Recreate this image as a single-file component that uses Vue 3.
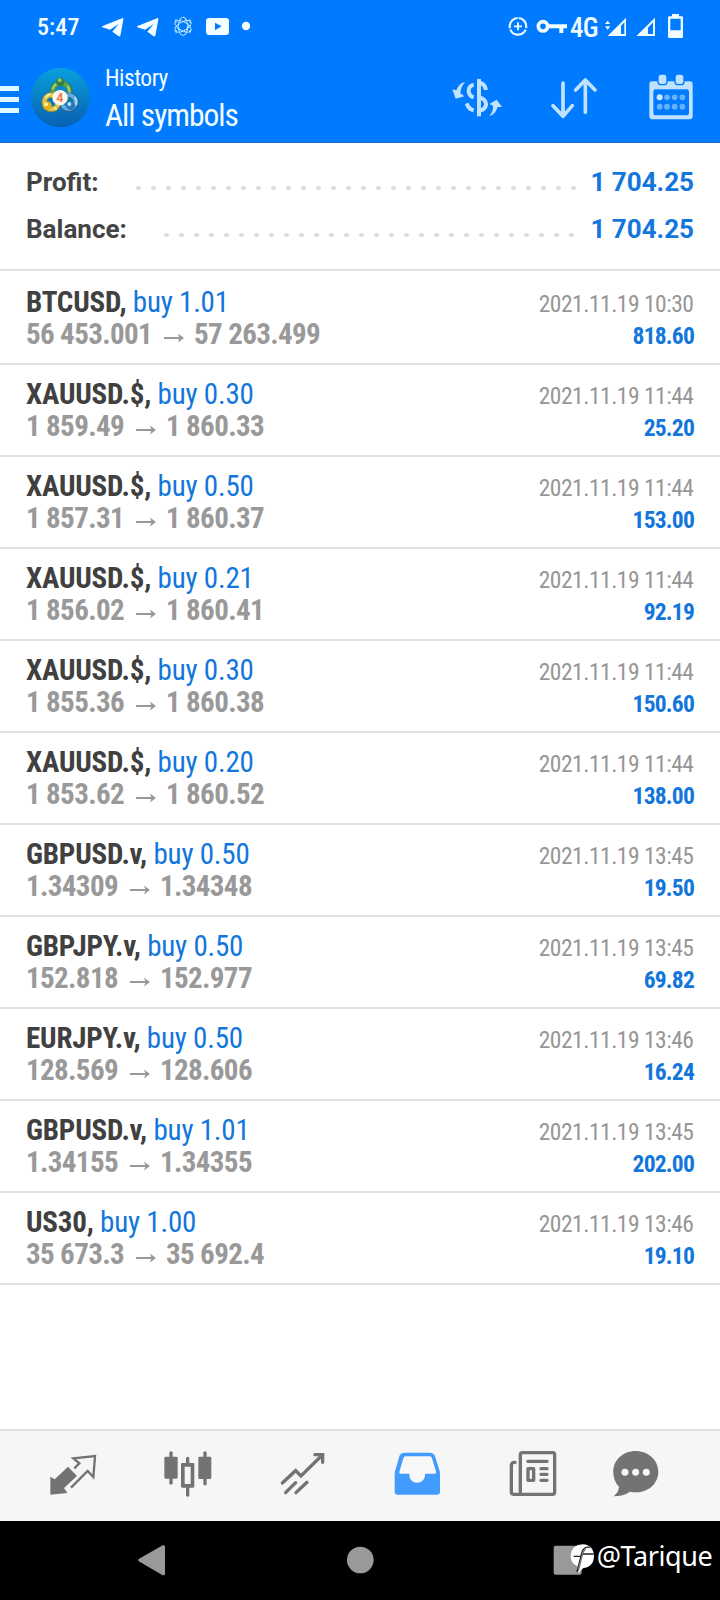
<script setup>
const summary = [
  { label: 'Profit:', value: '1 704.25', dots: 30 },
  { label: 'Balance:', value: '1 704.25', dots: 28 },
]
const deals = [
  ['BTCUSD', '1.01', '56 453.001', '57 263.499', '10:30', '818.60'],
  ['XAUUSD.$', '0.30', '1 859.49', '1 860.33', '11:44', '25.20'],
  ['XAUUSD.$', '0.50', '1 857.31', '1 860.37', '11:44', '153.00'],
  ['XAUUSD.$', '0.21', '1 856.02', '1 860.41', '11:44', '92.19'],
  ['XAUUSD.$', '0.30', '1 855.36', '1 860.38', '11:44', '150.60'],
  ['XAUUSD.$', '0.20', '1 853.62', '1 860.52', '11:44', '138.00'],
  ['GBPUSD.v', '0.50', '1.34309', '1.34348', '13:45', '19.50'],
  ['GBPJPY.v', '0.50', '152.818', '152.977', '13:45', '69.82'],
  ['EURJPY.v', '0.50', '128.569', '128.606', '13:46', '16.24'],
  ['GBPUSD.v', '1.01', '1.34155', '1.34355', '13:45', '202.00'],
  ['US30', '1.00', '35 673.3', '35 692.4', '13:46', '19.10'],
].map(([symbol, volume, open, close, time, profit]) => ({ symbol, volume, open, close, time, profit }))
</script>

<template>
  <div class="screen">
    <header class="top">
      <div class="status">
        <span class="clock">5:47</span>
        <svg class="notes" viewBox="300 42 460 72" width="153.33" height="24">
          <g fill="#f4fdff">
            <path d="M306 79 L368 54 Q371 54 370 59 L361 107 Q359 111 355 108 L337 95 L356 72 L330 89 L307 82 Z" />
            <path d="M411 79 L473 54 Q476 54 475 59 L466 107 Q464 111 460 108 L442 95 L461 72 L435 89 L412 82 Z" />
            <path fill-rule="evenodd" d="M628 54 H678 Q687 54 687 63 V96 Q687 105 678 105 H628 Q618 105 618 96 V63 Q618 54 628 54 Z M645 68 V91 L665 79 Z" />
            <circle cx="738" cy="78" r="12.5" />
          </g>
          <g fill="none" stroke="#d4f4ff" stroke-width="3.2" stroke-dasharray="6 1.5">
            <ellipse cx="549" cy="79" rx="14" ry="27" />
            <ellipse cx="549" cy="79" rx="13" ry="27" transform="rotate(60 549 79)" />
            <ellipse cx="549" cy="79" rx="13" ry="27" transform="rotate(120 549 79)" />
            <path d="M528 58 V68 M570 58 V68 M528 90 V100 M570 90 V100" />
          </g>
        </svg>
        <svg class="saver" viewBox="444 42 180 76" width="60" height="25.33">
          <circle cx="474" cy="79" r="25" fill="none" stroke="#eafaff" stroke-width="6.5" stroke-dasharray="42 5 58 4 44 4.1" transform="rotate(-85 474 79)" />
          <path d="M474 67 V91 M462 79 H486" stroke="#eafaff" stroke-width="5.5" />
          <circle cx="549" cy="79" r="14" fill="none" stroke="#f4fdff" stroke-width="11" />
          <path d="M564 79 H621 M604 79 V99" stroke="#f4fdff" stroke-width="12" />
        </svg>
        <span class="net">4G</span>
        <svg class="signals" viewBox="732 36 240 84" width="80" height="28">
          <g fill="#f0fcff">
            <path d="M735 72 L743 62 L751 72 Z M735 79 L743 89 L751 79 Z" />
            <path fill-rule="evenodd" d="M743 108 L798 53 V108 Z M783 77 V102 H793 V67 Z" />
            <path fill-rule="evenodd" d="M829 108 L885 53 V108 Z M864 83 V102 H879 V67 Z" />
            <path fill-rule="evenodd" d="M936 42 H957 V49 H966 Q969 49 969 53 V110 Q969 114 965 114 H928 Q924 114 924 110 V53 Q924 49 928 49 H936 Z M931 56 V91 H962 V56 Z" />
          </g>
        </svg>
      </div>
      <div class="bar">
        <div class="burger"><i></i><i></i><i></i></div>
        <svg class="logo" viewBox="90 202 182 182" width="60.67" height="60.67">
          <defs>
            <linearGradient id="sea" x1="0" y1="0" x2="0" y2="1">
              <stop offset="0" stop-color="#08a0dc" />
              <stop offset=".5" stop-color="#087fc6" />
              <stop offset="1" stop-color="#0860b4" />
            </linearGradient>
          </defs>
          <circle cx="181" cy="294" r="89" fill="url(#sea)" />
          <g fill="none">
            <circle cx="183" cy="276" r="26" stroke="#2d7b55" stroke-width="17" />
            <circle cx="183" cy="275" r="25" stroke="#62a850" stroke-width="13" />
            <circle cx="206" cy="308" r="22" stroke="#285f98" stroke-width="17" />
            <circle cx="206" cy="307" r="21" stroke="#5fb0e2" stroke-width="12" />
            <circle cx="154" cy="308" r="22" stroke="#7a8038" stroke-width="16" />
            <circle cx="154" cy="307" r="21" stroke="#dcc548" stroke-width="13" />
            <path d="M136 294 Q142 284 152 283 M162 324 L170 330" stroke="#f6eb9d" stroke-width="6" />
            <path d="M158 268 Q162 254 175 250 M203 259 Q209 267 209 279" stroke="#aed581" stroke-width="5" />
            <path d="M225 292 Q232 303 228 316" stroke="#a9dcf7" stroke-width="6" />
          </g>
          <circle cx="181" cy="247" r="13" fill="#388040" /><circle cx="179" cy="242" r="6" fill="#91c56c" />
          <circle cx="142" cy="318" r="13" fill="#e2b01c" /><circle cx="138" cy="314" r="6" fill="#fff0a0" />
          <circle cx="212" cy="318" r="13" fill="#2876bc" /><circle cx="208" cy="313" r="6" fill="#b5e3fc" />
          <circle cx="180" cy="294" r="23" fill="#fff6ef" />
          <text x="180" y="307" text-anchor="middle" class="four">4</text>
        </svg>
        <div class="titles">
          <div class="sub">History</div>
          <div class="main">All symbols</div>
        </div>
        <svg class="actions" viewBox="270 215 735 150" width="245" height="50">
          <g fill="none" stroke="#c0e2ff" stroke-width="12">
            <path d="M357 236 V348" />
            <path d="M341 253 Q326 257 326 272 Q327 287 341 291" />
            <path d="M359 247 Q375 250 378 269" />
            <path d="M320 309 Q326 327 341 330" />
            <path d="M359 291 Q379 297 378 314 Q375 328 359 331" />
          </g>
          <g fill="#c0e2ff">
            <path d="M315 246 Q298 247 289 270 L277 267 L287 295 L313 288 L301 279 Q302 260 315 246 Z" />
            <path d="M387 347 Q405 345 413 320 L426 320 L410 298 L388 311 L399 316 Q400 335 387 347 Z" />
          </g>
          <path d="M609 248 V348 M579 316 L609 348 L637 316 M676 336 V240 M647 269 L676 239 L705 269" fill="none" stroke="#c0e2ff" stroke-width="11" stroke-linecap="round" stroke-linejoin="round" />
          <path fill="#c0e2ff" fill-rule="evenodd" d="M877 243 H990 Q998 243 998 251 V348 Q998 357 989 357 H877 Q868 357 868 348 V251 Q868 243 877 243 Z M887 267 Q880 267 880 274 V337 Q880 345 888 345 H979 Q987 345 987 337 V274 Q987 267 980 267 Z" />
          <g fill="#c0e2ff" stroke="#007bff" stroke-width="4">
            <rect x="894" y="221" width="27" height="32" rx="9" />
            <rect x="945" y="221" width="27" height="32" rx="9" />
          </g>
          <g fill="#66b3fc">
            <circle cx="899" cy="291" r="9" fill="#cceaff" /><circle cx="921" cy="291" r="8.5" /><circle cx="944" cy="291" r="8.5" /><circle cx="967" cy="291" r="8.5" />
            <circle cx="899" cy="319" r="8.5" /><circle cx="921" cy="319" r="8.5" /><circle cx="944" cy="319" r="8.5" /><circle cx="967" cy="319" r="8.5" />
          </g>
        </svg>
      </div>
    </header>

    <section class="summary">
      <div v-for="row in summary" :key="row.label" class="sumrow">
        <span>{{ row.label }}</span>
        <span class="dots"><i v-for="n in row.dots" :key="n"></i></span>
        <span class="total">{{ row.value }}</span>
      </div>
    </section>

    <main class="deals">
      <article v-for="(d, i) in deals" :key="i" class="deal">
        <div class="left">
          <div class="name"><b>{{ d.symbol }},</b> <span>buy {{ d.volume }}</span></div>
          <div class="prices">
            <b>{{ d.open }}</b>
            <svg viewBox="0 0 20 10" width="20" height="10"><path d="M0 5 H18" fill="none" stroke="#999" stroke-width="2" /><path d="M14 0.5 L20 5 L14 9.5 L15.5 5 Z" fill="#999" /></svg>
            <b>{{ d.close }}</b>
          </div>
        </div>
        <div class="right">
          <div class="date">2021.11.19 {{ d.time }}</div>
          <div class="profit">{{ d.profit }}</div>
        </div>
      </article>
    </main>

    <nav class="tabs">
      <svg viewBox="140 85 850 155" width="283.33" height="51.67">
        <g fill="#737373">
          <path d="M150 171 L163 179 L203 141 L230 169 L191 205 L201 220 L150 225 Z" />
          <path d="M492 115 Q492 111 496 111 H507 V98 Q512 92 517 98 V111 H528 Q532 111 532 115 V173 Q532 177 528 177 H517 V192 Q512 197 507 192 V177 H496 Q492 177 492 173 Z" />
          <path d="M594 115 Q594 111 598 111 H609 V98 Q614 92 619 98 V111 H629 Q633 111 633 115 V174 Q633 178 629 178 H619 V194 Q614 201 609 194 V178 H598 Q594 178 594 174 Z" />
          <path fill-rule="evenodd" d="M557 115 Q562 108 567 115 V130 H578 Q582 130 582 134 V200 Q582 204 578 204 H567 V228 Q562 235 557 228 V204 H546 Q542 204 542 200 V134 Q542 130 546 130 H557 Z M553 141 V193 H571 V141 Z" />
        </g>
        <g fill="none" stroke="#737373">
          <path d="M222 146 L237 131 L219 116 L284 109 L279 172 L262 154 L212 204" stroke-width="7" />
          <path d="M846 190 L886 153 L902 169 L966 106 M856 219 L886 189 M887 219 L920 188 M944 105 H967 V128" stroke-width="10" stroke-linecap="round" />
        </g>
      </svg>
      <svg viewBox="100 85 800 155" width="266.67" height="51.67">
        <path fill="#429cff" d="M136 99 H212 Q221 99 225 107 L239 151 Q241 156 241 162 V216 Q241 225 232 225 H114 Q105 225 105 216 V162 Q105 156 107 151 L120 107 Q124 99 136 99 Z" />
        <path fill="#f8f8f8" d="M137 110 H210 Q215 110 217 116 L229 156 Q231 162 225 162 H196 V165 C196 197 149 197 149 165 V162 H123 Q117 162 119 156 L131 116 Q133 110 137 110 Z" />
        <g fill="none" stroke="#737373" stroke-width="10" stroke-linecap="round">
          <rect x="482" y="99" width="103" height="125" rx="6" />
          <path d="M466 128 Q455 127 455 138 V216 Q455 224 464 224 H484" />
          <path d="M505 125 H562" />
          <path d="M544 147 H562 M544 164 H562 M544 182 H562" />
          <rect x="505" y="147" width="17" height="35" stroke-linejoin="round" />
        </g>
        <path fill="#737373" d="M828 94 C866 94 896 121 896 156 C896 192 866 218 829 218 Q821 218 811 216 Q791 230 762 230 Q778 216 778 201 Q761 184 761 156 C761 121 790 94 828 94 Z" />
        <g fill="#f7f7f7"><circle cx="796" cy="158" r="10.5" /><circle cx="828" cy="158" r="10.5" /><circle cx="860" cy="158" r="10.5" /></g>
      </svg>
    </nav>

    <footer class="system">
      <svg viewBox="414 370 708 104" width="236" height="34.67" fill="#999">
        <path d="M416 418 L488 377 Q495 375 495 381 V462 Q495 468 488 467 L416 425 Q413 421 416 418 Z" />
        <circle cx="1081" cy="421" r="40" />
      </svg>
      <div class="mark">
        <svg viewBox="578 370 126 100" width="42" height="33.33">
          <rect x="580" y="378" width="84" height="87" rx="6" fill="#999" />
          <path d="M668 374 C689 374 701 391 701 409 C701 431 688 444 669 445 L654 460 L651 440 Q630 431 631 407 Q634 375 668 374 Z" fill="#fff" />
          <path d="M690 383 Q671 380 665 397 L650 457 M640 410 H662 L668 403 H700" fill="none" stroke="#222" stroke-width="4" />
          <path d="M676 389 Q669 392 666 405 L654 454" fill="none" stroke="#777" stroke-width="4" />
        </svg>
        <span class="handle">@Tarique</span>
      </div>
    </footer>
  </div>
</template>

<style>
body { margin: 0; background: #fff; }
</style>

<style scoped>
.screen { width: 720px; height: 1600px; display: flex; flex-direction: column; background: #fff; font-family: Roboto, "Liberation Sans", sans-serif; overflow: hidden; }
.screen svg { display: block; flex: none; }
.top { height: 143px; box-sizing: border-box; background: #007bff; border-bottom: 1px solid #1b6cc4; color: #f2fdff; }
.status { height: 55px; display: flex; align-items: flex-start; }
.clock { margin: 13px 0 0 37px; width: 63px; font-size: 24px; line-height: 28px; font-weight: 500; font-stretch: 85%; letter-spacing: 0.1px; white-space: nowrap; }
.notes { margin-top: 14px; }
.saver { margin: 14px 0 0 254.7px; }
.net { width: 34px; margin: 12px 0 0 2px; font-size: 27px; line-height: 32px; font-weight: 500; letter-spacing: -0.8px; font-stretch: 75%; }
.signals { margin-top: 12px; }
.bar { height: 87px; display: flex; align-items: flex-start; }
.burger { width: 30px; display: flex; flex-direction: column; gap: 6px; margin-top: 31px; }
.burger i { width: 19px; height: 5px; background: #dffbff; }
.logo { margin-top: 12.3px; }
.four { font: bold 38px Roboto, sans-serif; fill: #ee8050; }
.titles { margin: 9px 0 0 14.3px; width: 345px; white-space: nowrap; font-stretch: 75%; font-weight: 450; }
.sub { font-size: 23.5px; line-height: 28px; letter-spacing: -0.5px; }
.main { font-size: 31.5px; line-height: 39px; margin-top: 4px; letter-spacing: -1px; }
.actions { margin: 16.7px 0 0 0; }
.summary { height: 126px; box-sizing: border-box; padding: 18px 26px 0 26px; }
.sumrow { height: 47px; display: flex; justify-content: space-between; font-size: 26px; line-height: 43px; font-weight: 700; color: #444; }
.total { color: #1276dc; width: 102px; display: flex; justify-content: flex-end; white-space: nowrap; }
.dots { display: flex; gap: 10.5px; margin-left: auto; margin-right: 16.5px; padding-top: 24.5px; }
.sumrow:last-child .dots { margin-right: 18.5px; }
.dots i { width: 4.5px; height: 4.5px; border-radius: 50%; background: #dcdcdc; }
.deals { border-top: 2px solid #e1e1e1; }
.deal { height: 92px; box-sizing: border-box; border-bottom: 2px solid #e1e1e1; padding: 12px 26px 0; display: flex; justify-content: space-between; white-space: nowrap; font-stretch: 75%; }
.deal:first-child { height: 94px; padding-top: 14px; }
.name { font-size: 29px; line-height: 34px; color: #404040; letter-spacing: -0.2px; }
.name span { color: #1276dc; }
.prices { display: flex; align-items: center; font-size: 29px; line-height: 32px; color: #999; height: 32px; letter-spacing: -0.63px; margin-top: -1px; }
.prices svg { margin: 7px 10px 0 12px; }
.right { text-align: right; }
.date { font-size: 23.5px; line-height: 32px; margin-top: 3px; color: #969696; letter-spacing: -0.48px; margin-right: 0.5px; }
.profit { font-size: 23.5px; line-height: 32px; font-weight: 700; color: #1276dc; letter-spacing: -0.8px; }
.tabs { margin-top: auto; height: 92px; box-sizing: border-box; flex: none; border-top: 2px solid #e1e1e1; background: #f6f6f6; display: flex; padding: 17.3px 0 0 46.7px; gap: 63.3px; }
.system { height: 79px; flex: none; background: #000; display: flex; align-items: flex-start; }
.system > svg { margin: 22.3px 0 0 138px; }
.mark { display: flex; margin: 22.3px 0 0 178.7px; }
.handle { color: #fff; font: 27px/32px "Noto Sans", sans-serif; letter-spacing: -0.4px; margin: -3px 0 0 2px; }
</style>
